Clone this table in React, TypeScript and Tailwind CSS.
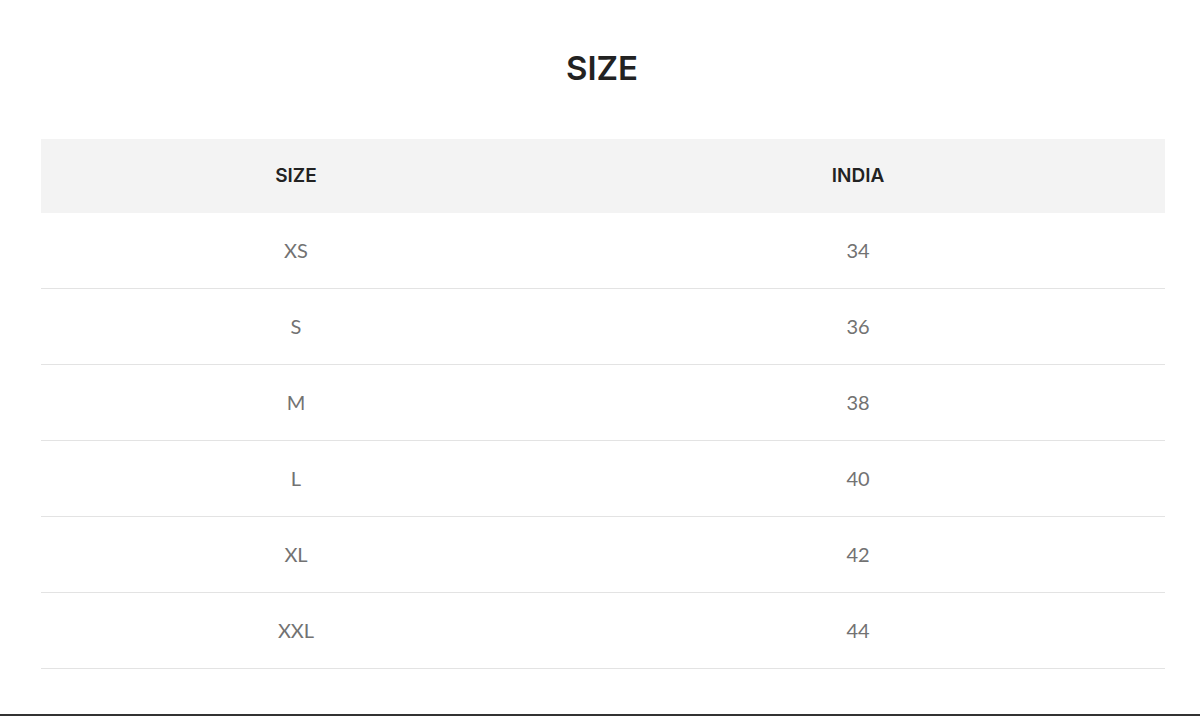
const rows = [
  ["XS", "34"],
  ["S", "36"],
  ["M", "38"],
  ["L", "40"],
  ["XL", "42"],
  ["XXL", "44"],
];

export default function App() {
  return (
    <div className="h-[716px] w-[1200px] bg-white flex flex-col font-['Lato',sans-serif]">
      <h1 className="pt-[44px] h-[139px] pl-[4px] text-center text-[33px] leading-[48px] font-semibold text-[#222] font-['Inter',sans-serif]">
        SIZE
      </h1>

      <div className="mx-[41px] w-[1124px]">
        <div className="grid grid-cols-[510px_614px] h-[74px] items-center bg-[#f3f3f3] text-[19px] font-semibold text-[#222] font-['Inter',sans-serif]">
          <div className="text-center">SIZE</div>
          <div className="text-center">INDIA</div>
        </div>
        {rows.map(([size, india]) => (
          <div
            key={size}
            className="grid grid-cols-[510px_614px] h-[76px] items-center border-b border-[#e3e3e3] text-[20px] leading-[26px] pb-[2px] font-normal text-[#727272]"
          >
            <div className="text-center">{size}</div>
            <div className="text-center">{india}</div>
          </div>
        ))}
      </div>

      <div className="flex-1" />
      <div className="h-[2px] bg-[#333]" />
    </div>
  );
}
